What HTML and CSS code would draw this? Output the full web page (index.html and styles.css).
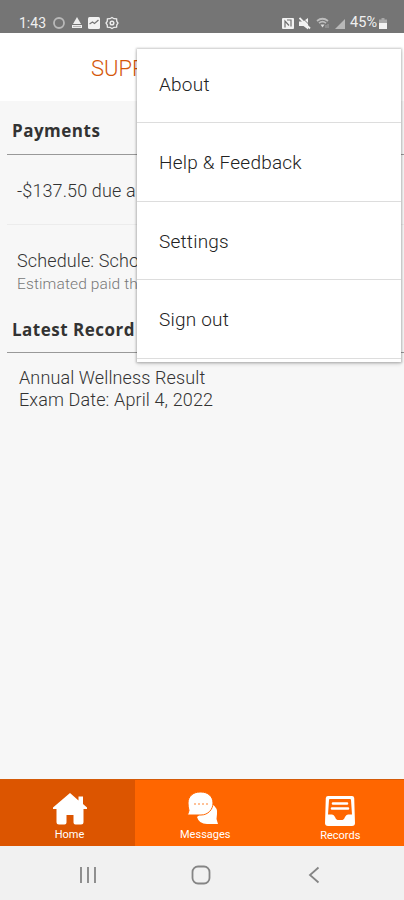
FILE: index.html
```html
<!DOCTYPE html>
<html lang="en">
<head>
  <meta charset="UTF-8" />
  <meta name="viewport" content="width=device-width, initial-scale=1" />
  <title>Home</title>
  <link rel="stylesheet" href="styles.css">
</head>
<body>
  <div class="status-bar">
    <div class="status-left">
      <span class="clock">1:43</span>
      <svg width="14" height="14" viewBox="0 0 14 14"><circle cx="7" cy="7" r="5" fill="none" stroke="#b9b9b9" stroke-width="1.8"/></svg>
      <svg width="12" height="14" viewBox="0 0 12 14" fill="#eee"><path d="M6 1l4 7H2z"/><path d="M1 9h10v3H1z"/><path d="M2 10.5h8" stroke="#999" stroke-width=".7"/></svg>
      <svg width="12" height="14" viewBox="0 0 12 14"><rect y="1" width="12" height="12" rx="1.5" fill="#f2f2f2"/><path d="M1.5 8l3-2 2 1.5L10.5 4" fill="none" stroke="#777" stroke-width="1.3"/></svg>
      <svg width="14" height="14" viewBox="0 0 14 14" fill="none" stroke="#ececec"><path d="M7 1.5l2 1.2 2.6.2.2 2.5L13 7l-1.2 1.8-.2 2.3-2.6.2L7 12.5l-2-1.2-2.6-.2-.2-2.3L1 7l1.2-1.6.2-2.5L5 2.7z" stroke-width="1.3"/><circle cx="7" cy="7" r="1.8" stroke-width="1.5"/></svg>
    </div>
    <div class="status-right">
      <svg width="12" height="13" viewBox="0 0 12 13"><rect y="1" width="12" height="11" rx="1" fill="#f2f2f2"/><path d="M3 10.5V4l4 4.5M5 3h4v6.500" fill="none" stroke="#707070" stroke-width="1.2"/></svg>
      <svg width="12" height="13" viewBox="0 0 12 13"><path d="M0 4.500h4L9 1v11.500L4.500 9H0z" fill="#f2f2f2"/><path d="M2.500 0l9 9" stroke="#757575" stroke-width="1"/><path d="M.5 1l10.500 10.500" stroke="#f2f2f2" stroke-width="1.8"/></svg>
      <svg width="14" height="13" viewBox="0 0 14 13" fill="none" stroke="#bdbdbd"><path d="M1 4q5.500-4.500 11 0M3 6.200q3.500-3 7 0" stroke-width="1.7"/><path d="M4.500 7.500h4l-2 3z" fill="#ddd" stroke="none"/><path d="M10 8v3M12 7v4" stroke="#a5a5a5"/></svg>
      <svg width="11" height="13" viewBox="0 0 11 13"><path d="M0 12L10 2v10z" fill="#b8b8b8"/></svg>
      <span class="battery-level">45%</span>
      <svg class="battery" width="8" height="13" viewBox="0 0 8 13"><path d="M2.500 1h3v1.500H8V7H0V2.500h2.500z" fill="#a8a8a8"/><path d="M0 6h8v6H0z" fill="#f2f2f2"/></svg>
    </div>
  </div>

  <header class="app-header">
    <h1>SUPP</h1>
  </header>

  <main class="content">
    <h2 class="section-title">Payments</h2>
    <div class="payment-row">-$137.50 due a</div>
    <div class="schedule-row">
      <div class="schedule">Schedule: Scho</div>
      <div class="estimate">Estimated paid th</div>
    </div>
    <h2 class="section-title records-title">Latest Record</h2>
    <div class="record">
      <div class="record-name">Annual Wellness Result</div>
      <div class="record-date">Exam Date: April 4, 2022</div>
    </div>
  </main>

  <nav class="tab-bar">
    <a class="tab active">
      <svg width="36" height="32" viewBox="0 0 36 32" fill="#fff"><path d="M18 0L1 14.5v1.500h3.500v13q0 2.500 2.500 2.500h5.500q2 0 2-2v-7.500h7v7.500q0 2 2 2H29q2.500 0 2.500-2.500V16H35v-1.500l-4-3.500V3.500h-4.500v4z"/></svg>
      <span class="tab-label">Home</span>
    </a>
    <a class="tab messages">
      <svg width="32" height="33" viewBox="0 0 32 33"><path d="M25 12q6 4 5 10l-.5 5 1.500 5H20q-8 0-10-7z" fill="#fff"/><path d="M13 0h1c7 0 12 4.500 12 11s-5 12-12 12H.5l1.500-4.500Q1 15 1 11C1 4.500 6 0 13 0z" fill="#fff" stroke="#ff6600" stroke-width="1"/><g fill="#ffad75"><circle cx="8" cy="12" r="1"/><circle cx="12" cy="12" r="1"/><circle cx="16" cy="12" r="1"/><circle cx="20" cy="12" r="1"/></g></svg>
      <span class="tab-label">Messages</span>
    </a>
    <a class="tab records">
      <svg width="30" height="30" viewBox="0 0 30 30"><path d="M3 0h24q2 0 2.200 2L30 27q0 3-3 3H3q-3 0-3-3L.8 2Q1 0 3 0z" fill="#fff"/><path d="M5 3h20q1 0 1 1l1 14.500h-4q-2 0-3 2.500-1 3-2.500 3h-5q-1.500 0-2.500-3-1-2.500-3-2.500H3L4 4q0-1 1-1z" fill="#ff6600"/><path d="M8 7.500h14M7 12.500h16" stroke="#fff" stroke-width="2.6" stroke-linecap="round"/></svg>
      <span class="tab-label">Records</span>
    </a>
  </nav>

  <div class="system-nav">
    <svg width="18" height="18" viewBox="0 0 18 18"><path d="M2 1v16M9 1v16M16 1v16" stroke="#858585" stroke-width="1.8"/></svg>
    <svg class="home-key" width="20" height="20" viewBox="0 0 20 20"><rect x="1.5" y="1.5" width="17" height="17" rx="5.5" fill="none" stroke="#858585" stroke-width="1.8"/></svg>
    <svg width="12" height="18" viewBox="0 0 12 18"><path d="M10.5 1.5L2 9l8.500 7.500" fill="none" stroke="#858585" stroke-width="1.8"/></svg>
  </div>

  <div class="menu">
    <a class="menu-item">About</a>
    <a class="menu-item">Help &amp; Feedback</a>
    <a class="menu-item">Settings</a>
    <a class="menu-item">Sign out</a>
  </div>
</body>
</html>
```
FILE: styles.css
```css
* { box-sizing: border-box; }

body {
  margin: 0;
  height: 900px;
  display: flex;
  flex-direction: column;
  position: relative;
  overflow: hidden;
  font-family: Roboto, "Liberation Sans", sans-serif;
  background: #f7f7f7;
  color: #333;
}

svg { display: block; }

.status-bar {
  height: 33px;
  padding: 13px 17px 0 19px;
  display: flex;
  justify-content: space-between;
  background: #757575;
  color: #f0f0f0;
  font-size: 14px;
  line-height: 20px;
}

.status-left,
.status-right {
  display: flex;
  align-items: center;
  gap: 5px;
}

.clock { width: 28px; }

.battery-level {
  margin-left: -1px;
  font-size: 14.5px;
}

.battery { margin-left: -3px; }

.app-header {
  height: 68px;
  background: #fff;
  padding: 0 91px;
}

.app-header h1 {
  margin: 0;
  font-size: 22px;
  font-weight: 300;
  line-height: 71px;
  color: #d4570a;
}

.content {
  flex: 1;
  padding-left: 7px;
  font-weight: 300;
  letter-spacing: 0.12px;
  white-space: nowrap;
}

.section-title {
  margin: 0;
  height: 54px;
  padding: 17px 5px 0;
  border-bottom: 1px solid #999;
  font-family: "Open Sans", "Noto Sans", sans-serif;
  font-size: 17px;
  font-weight: 700;
  line-height: 26px;
  letter-spacing: 0.5px;
  color: #333;
}

.payment-row {
  height: 70px;
  padding-left: 10px;
  border-bottom: 1px solid #ececec;
  font-size: 18px;
  line-height: 72px;
}

.schedule-row {
  height: 78px;
  padding: 23px 0 0 10px;
}

.schedule {
  font-size: 18px;
  line-height: 26px;
}

.estimate {
  font-size: 15.5px;
  line-height: 21px;
  color: #777;
}

.records-title {
  height: 50px;
  padding-top: 14px;
}

.record {
  padding: 14px 0 0 12px;
  font-size: 18px;
  line-height: 22px;
}

.tab-bar {
  height: 67px;
  display: grid;
  grid-template-columns: 135px 1fr 1fr;
  border-top: 1px solid #d45a08;
  background: #ff6600;
  color: #fff;
}

.tab {
  display: flex;
  flex-direction: column;
  align-items: center;
  gap: 2px;
  padding: 13px 0 0 4px;
}

.tab.active { background: #dc5500; }

.tab.messages {
  padding-top: 12px;
  padding-left: 6px;
}

.tab.messages svg { margin-left: -4px; }
.tab.records { padding: 16px 0 0 7px; }

.tab-label {
  font-size: 11px;
  line-height: 16px;
}

.system-nav {
  height: 54px;
  display: flex;
  align-items: center;
  justify-content: space-between;
  padding: 3px 84px 0 79px;
  background: #f1f1f1;
}

.home-key { margin-right: 4px; }

/* dropdown over the page */
.menu {
  position: absolute;
  top: 49px;
  left: 137px;
  width: 264px;
  height: 313px;
  background: #fff;
  box-shadow: 0 0 2px 1px rgba(0, 0, 0, 0.2), 0 2px 4px rgba(0, 0, 0, 0.15);
}

.menu-item {
  display: block;
  height: 78.5px;
  padding-left: 22px;
  border-bottom: 1px solid #ddd;
  font-size: 19px;
  font-weight: 300;
  line-height: 79px;
  letter-spacing: 0.22px;
  color: #222;
}

.menu-item:first-child {
  height: 74px;
  line-height: 72px;
}
```
